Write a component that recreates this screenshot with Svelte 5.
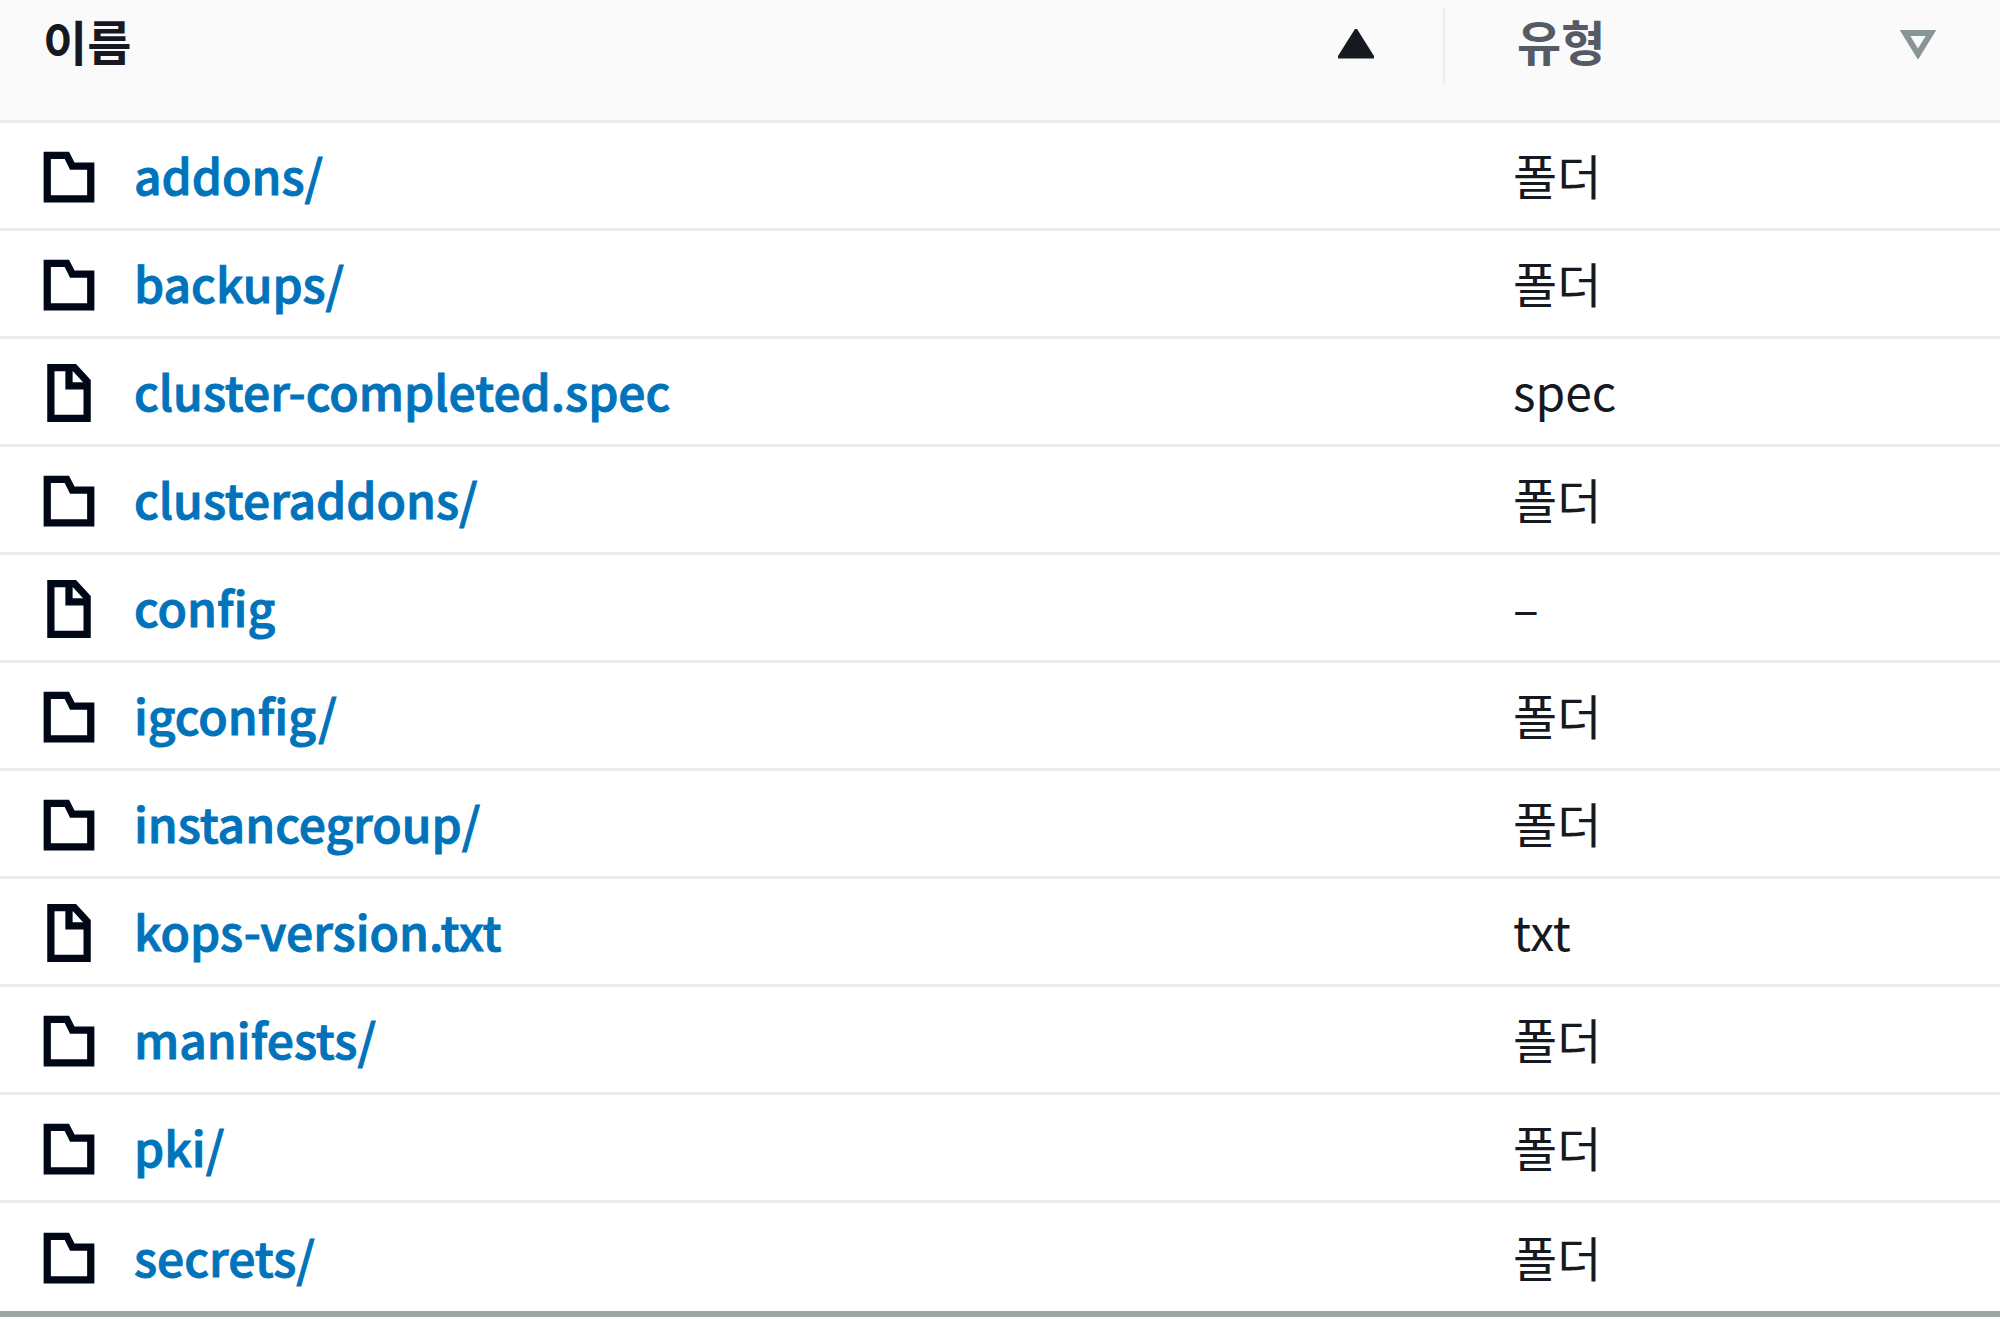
<script>
let sortAscending = true;

const objects = [
  { name: 'addons/', type: '폴더' },
  { name: 'backups/', type: '폴더' },
  { name: 'cluster-completed.spec', type: 'spec' },
  { name: 'clusteraddons/', type: '폴더' },
  { name: 'config', type: '–' },
  { name: 'igconfig/', type: '폴더' },
  { name: 'instancegroup/', type: '폴더' },
  { name: 'kops-version.txt', type: 'txt' },
  { name: 'manifests/', type: '폴더' },
  { name: 'pki/', type: '폴더' },
  { name: 'secrets/', type: '폴더' }
];

function isFolder(object) {
  return object.name.endsWith('/');
}

function toggleSort() {
  sortAscending = !sortAscending;
}

$: rows = sortAscending ? objects : [...objects].reverse();
</script>

<table class="object-table">
	<colgroup>
		<col class="name-col" />
		<col />
	</colgroup>
	<thead>
		<tr>
			<th scope="col" aria-sort={sortAscending ? 'ascending' : 'descending'}>
				<button class="sort-button active" on:click={toggleSort}>
					<span>이름</span>
					<svg class="sort-icon" class:flipped={!sortAscending} viewBox="0 0 36 30" aria-hidden="true">
						<path d="M18 3 33 27H3z" fill="currentColor" stroke="currentColor" stroke-width="5" />
					</svg>
				</button>
			</th>
			<th scope="col">
				<button class="sort-button">
					<span>유형</span>
					<svg class="sort-icon muted" viewBox="0 0 36 30" aria-hidden="true">
						<path d="M5 4h26L18 25z" fill="none" stroke="currentColor" stroke-width="6" />
					</svg>
				</button>
			</th>
		</tr>
	</thead>
	<tbody>
		{#each rows as object (object.name)}
			<tr>
				<td>
					<div class="object-name">
						<svg class="object-icon" viewBox="0 0 16 16" fill="none" stroke="currentColor" stroke-width="2" aria-hidden="true">
							{#if isFolder(object)}
								<path d="M2 2h5.4l1.5 3H14v9H2z" />
							{:else}
								<path d="M3 1h6.5L13 4.8V15H3z" />
								<path d="M8 1v5h5" />
							{/if}
						</svg>
						<a href="#{object.name}">{object.name}</a>
					</div>
				</td>
				<td class="object-type">{object.type}</td>
			</tr>
		{/each}
	</tbody>
</table>

<style>
	:global(body) {
		margin: 0;
		background: #ffffff;
	}

	.object-table {
		width: 100%;
		table-layout: fixed;
		border-collapse: separate;
		border-spacing: 0;
		border-bottom: 6px solid #9aa5a6;
		box-shadow: 0 4px 0 #c8cecf;
		color: #16191f;
		font-family: "Noto Sans CJK KR", sans-serif;
		font-size: 48px;
		line-height: 72px;
	}

	.name-col {
		width: 72.25%;
	}

	th {
		padding: 8px 0 37px;
		border-bottom: 3px solid #eaeded;
		background: #fafafa;
		text-align: left;
	}

	.sort-button {
		display: flex;
		align-items: flex-start;
		justify-content: space-between;
		width: 100%;
		height: 75px;
		padding: 0 64px 0 72px;
		border: 0;
		background: none;
		color: #545b64;
		font: inherit;
		font-weight: 700;
		line-height: 64px;
		cursor: pointer;
	}

	.sort-button.active {
		padding: 0 69px 0 43px;
		border-right: 2px solid #eaeded;
		color: #16191f;
	}

	.sort-icon {
		width: 36px;
		height: 30px;
		margin-top: 21px;
	}

	.sort-icon.muted {
		color: #879596;
	}

	.sort-icon.flipped {
		transform: rotate(180deg);
	}

	td {
		height: 102px;
		padding: 0 0 3px;
		border-bottom: 3px solid #eaeded;
	}

	tbody tr:last-child td {
		height: 105px;
		border-bottom: 0;
	}

	.object-name {
		display: flex;
		align-items: center;
		gap: 36px;
		padding-left: 40px;
	}

	.object-icon {
		flex: none;
		width: 58px;
		height: 58px;
		margin-top: 5px;
		color: #000716;
	}

	a {
		color: #0073bb;
		font-weight: 500;
		text-decoration: none;
		-webkit-text-stroke: 1px currentColor;
	}

	a:hover {
		text-decoration: underline;
	}

	.object-type {
		padding-left: 68px;
	}
</style>
